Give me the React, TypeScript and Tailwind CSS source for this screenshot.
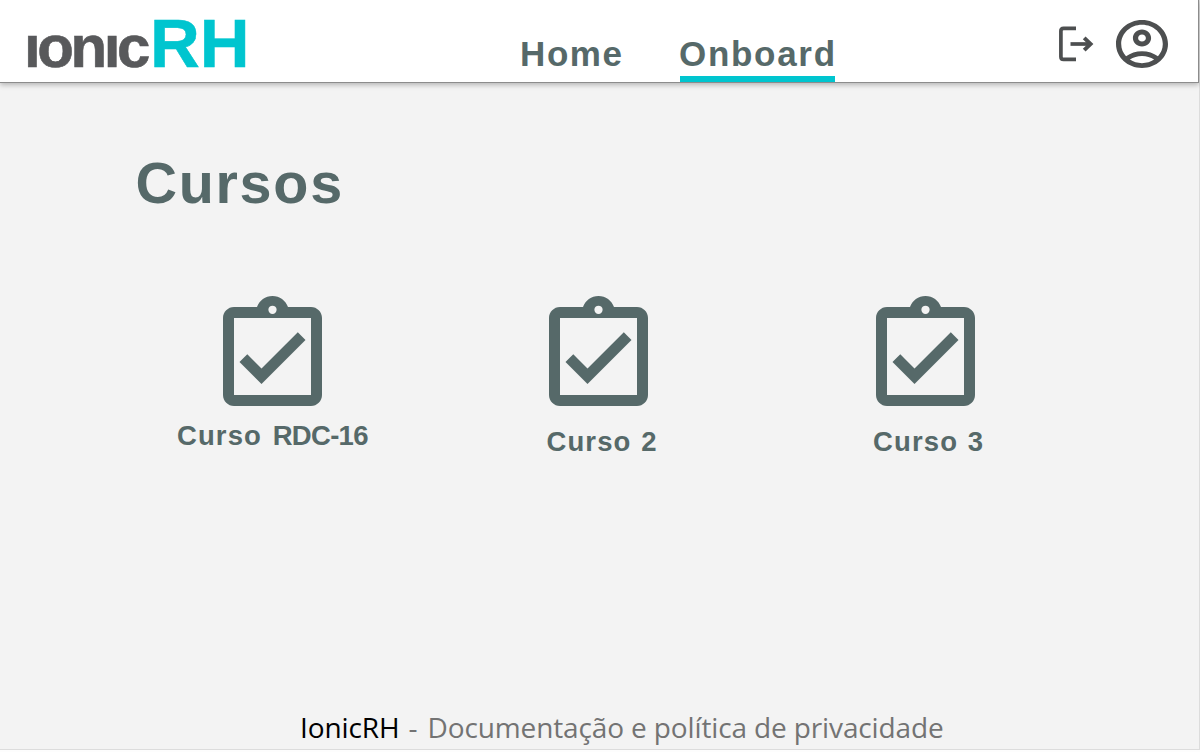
import React from "react";

const sans = "font-['Liberation_Sans',Arial,sans-serif]";

function Logo() {
  return (
    <div className="mt-[4px] ml-[24px] flex w-[329px] items-baseline leading-[80px] font-bold whitespace-nowrap">
      <span className="text-[60px] tracking-[-3.4px] text-[#58595b] [-webkit-text-stroke:0.6px_#58595b]">ıonıc</span>
      <span className="ml-[3px] text-[69px] tracking-[-0.2px] text-[#00c5cf] [-webkit-text-stroke:0.5px_#00c5cf]">
        RH
      </span>
    </div>
  );
}

function LogoutIcon() {
  return (
    <svg className="block" width="36" height="36" viewBox="0 0 36 36" fill="none" stroke="#4d4f50">
      <path d="M18 2.4H5.6Q2.9 2.4 2.9 5.1V30.7Q2.9 33.4 5.6 33.4H18" strokeWidth="3.7" />
      <path d="M12.5 18H33" strokeWidth="3.7" />
      <path d="M26.2 11.8L32.6 18L26.2 24.2" strokeWidth="3.9" />
    </svg>
  );
}

function AccountIcon() {
  return (
    <svg className="block" width="52" height="48" viewBox="2 2 20 20" preserveAspectRatio="none" fill="#4d4f50">
      <path d="M12 2C6.48 2 2 6.48 2 12s4.48 10 10 10 10-4.48 10-10S17.52 2 12 2zM7.35 18.5C8.66 17.56 10.26 17 12 17s3.34.56 4.65 1.5c-1.31.94-2.91 1.5-4.65 1.5s-3.34-.56-4.65-1.5zm10.79-1.38C16.45 15.8 14.32 15 12 15s-4.45.8-6.14 2.12C4.7 15.73 4 13.95 4 12c0-4.42 3.58-8 8-8s8 3.58 8 8c0 1.95-.7 3.73-1.86 5.12z" />
      <path d="M12 6c-1.93 0-3.5 1.57-3.5 3.5S10.07 13 12 13s3.5-1.57 3.5-3.5S13.93 6 12 6zm0 5c-.83 0-1.5-.67-1.5-1.5S11.17 8 12 8s1.5.67 1.5 1.5S12.83 11 12 11z" />
    </svg>
  );
}

function ClipboardIcon() {
  return (
    <svg className="block" width="99" height="110" viewBox="3 1 18 20" fill="#566969">
      <path
        fillRule="evenodd"
        d="M19 3h-4.18C14.4 1.84 13.3 1 12 1s-2.4.84-2.82 2H5c-1.1 0-2 .9-2 2v14c0 1.1.9 2 2 2h14c1.1 0 2-.9 2-2V5c0-1.1-.9-2-2-2zM12 2.75a.75.75 0 1 1 0 1.5.75.75 0 0 1 0-1.5zM19 19H5V5h14z"
      />
      <path d="M18 9l-1.4-1.41-6.6 6.58-2.59-2.58L6 13l4 4z" />
    </svg>
  );
}

function Course({ name, labelClass, nameClass }: { name: string; labelClass: string; nameClass: string }) {
  return (
    <div className="flex w-[326.6px] flex-col items-center">
      <ClipboardIcon />
      <div className={labelClass}>
        <span className="tracking-[1.1px]">Curso </span>
        <span className={nameClass}>{name}</span>
      </div>
    </div>
  );
}

export default function App() {
  return (
    <div className={`h-[752px] w-[1200px] overflow-hidden bg-[#fdfdfd] ${sans}`}>
      <div className="flex h-[750px] w-[1200px] flex-col border-r border-b border-[#dcdcdc] bg-[#f3f3f3]">
        <header className="flex h-[83px] w-[1199px] shrink-0 border-r border-b border-[#8c8c8c] bg-white shadow-[0_2px_5px_rgba(0,0,0,0.25)]">
          <Logo />
          <nav className="ml-[167px] flex text-[35px] leading-[40px] font-bold text-[#566969]">
            <a className="mt-[34px] w-[160px] tracking-[1.6px]">Home</a>
            <a className="flex h-[82px] w-[155px] flex-col border-b-[6px] border-[#00c5cf] pt-[34px] tracking-[1.7px] whitespace-nowrap">
              <span className="-ml-[1px]">Onboard</span>
            </a>
          </nav>
          <div className="mt-[26px] ml-[223px]">
            <LogoutIcon />
          </div>
          <div className="mt-[20px] ml-[22px]">
            <AccountIcon />
          </div>
        </header>
        <main className="flex-1">
          <h1 className="mt-[67px] ml-[135.5px] text-[57.5px] leading-[66px] font-bold tracking-[1.7px] text-[#566969]">
            Cursos
          </h1>
          <section className="mt-[80px] ml-[109.1px] flex text-[27.5px] leading-[32px] font-bold whitespace-nowrap text-[#566969]">
            <Course name="RDC-16" labelClass="mt-[14px]" nameClass="ml-[2px] tracking-[-0.7px]" />
            <Course name="2" labelClass="mt-[20px] ml-[5px]" nameClass="ml-[1px]" />
            <Course name="3" labelClass="mt-[20px] ml-[5px]" nameClass="ml-[1px]" />
          </section>
        </main>
        <footer className="mb-[2px] ml-[300px] font-['Open_Sans','Noto_Sans',sans-serif] text-[28px] leading-[40px] whitespace-nowrap text-[#737373]">
          <span className="tracking-[-0.1px] text-black">IonicRH</span>
          <span className="ml-[9px]">-</span>
          <span className="ml-[10px] tracking-[-0.13px]">Documentação e política de privacidade</span>
        </footer>
      </div>
    </div>
  );
}
